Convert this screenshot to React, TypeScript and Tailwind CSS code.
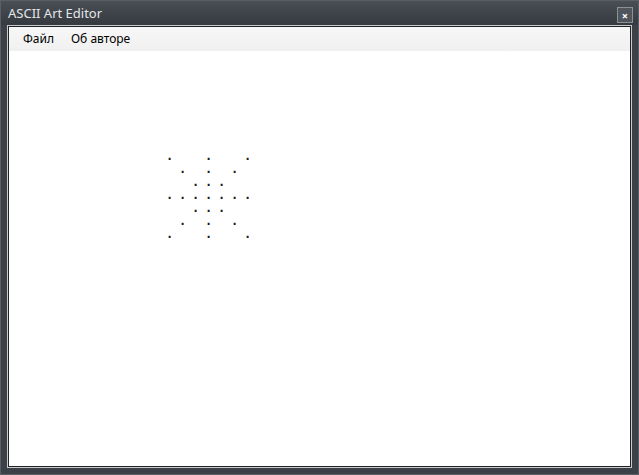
const art = [
  ".  .  .",
  " . . . ",
  "  ...  ",
  ".......",
  "  ...  ",
  " . . . ",
  ".  .  .",
];

export default function App() {
  return (
    <div className="w-[639px] h-[475px] bg-[#3c4147] border border-[#5a5f65] flex flex-col overflow-hidden" style={{ fontFamily: '"Noto Sans", "Open Sans", sans-serif' }}>
      {/* Title bar */}
      <div className="h-[24px] flex items-center justify-between pl-[7px] pr-[5px] bg-gradient-to-b from-[#4a4f55] to-[#353a40]">
        <span className="text-[13px] text-[#e4e6e8] leading-none">ASCII Art Editor</span>
        <button className="w-[16px] h-[16px] mt-[4px] border border-[#8c9196] bg-[#50555b] flex items-center justify-center text-white text-[11px] font-bold leading-none">
          ×
        </button>
      </div>

      {/* Client */}
      <div className="flex-1 px-[6px] pb-[6px] pt-[0px]">
        <div className="h-full border border-[#c8cacc] bg-[#1f2327] p-px">
          <div className="h-full bg-white flex flex-col">
            <div className="h-[24px] bg-gradient-to-b from-[#f7f7f7] to-[#f0f0f0] flex items-center gap-[17px] pl-[14px]">
              <span className="text-[12px] text-black">Файл</span>
              <span className="text-[12px] text-black">Об авторе</span>
            </div>
            <div className="flex-1 pl-[154px] pt-[99px]">
              <div className="grid grid-cols-[repeat(7,13px)]" style={{ fontFamily: '"DejaVu Sans Mono", monospace' }}>
                {art.flatMap((row, r) =>
                  row.split("").map((ch, c) => (
                    <span key={`${r}-${c}`} className="h-[13px] text-[12px] font-bold leading-[13px] text-center text-[#1a1a1a]">
                      {ch === "." ? "." : "\u00a0"}
                    </span>
                  ))
                )}
              </div>
            </div>
          </div>
        </div>
      </div>
    </div>
  );
}
